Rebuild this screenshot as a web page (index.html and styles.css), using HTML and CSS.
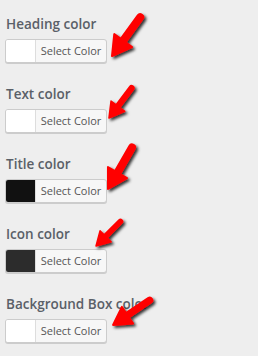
FILE: index.html
```html
<!DOCTYPE html>
<html>
<head>
    <meta charset="UTF-8">
    <title>Colors</title>
    <link rel="stylesheet" href="styles.css">
</head>
<body>
    <div class="panel">
        <div class="field">
            <div class="label">Heading color</div>
            <button class="picker"><span class="swatch white"></span><span class="text">Select Color</span></button>
        </div>
        <div class="field">
            <div class="label">Text color</div>
            <button class="picker"><span class="swatch white"></span><span class="text">Select Color</span></button>
        </div>
        <div class="field">
            <div class="label">Title color</div>
            <button class="picker"><span class="swatch black"></span><span class="text">Select Color</span></button>
        </div>
        <div class="field">
            <div class="label">Icon color</div>
            <button class="picker"><span class="swatch dark"></span><span class="text">Select Color</span></button>
        </div>
        <div class="field">
            <div class="label">Background Box color</div>
            <button class="picker"><span class="swatch white"></span><span class="text">Select Color</span></button>
        </div>
    </div>

    <svg class="arrows" width="258" height="356" viewBox="0 0 258 356">
        <defs>
            <filter id="shadow" x="-30%" y="-30%" width="160%" height="160%">
                <feDropShadow dx="2" dy="2" stdDeviation="1.5" flood-color="#000" flood-opacity="0.8"/>
            </filter>
            <g id="arrow">
                <line x1="-14" y1="0" x2="-48" y2="0" stroke="#ff0000" stroke-width="8" stroke-linecap="round"/>
                <polygon points="0,0 -19,-11 -19,11" fill="#ff0000" stroke="#ff0000" stroke-width="2" stroke-linejoin="round"/>
            </g>
        </defs>
        <g filter="url(#shadow)">
            <use href="#arrow" transform="translate(112 56) rotate(126)"/>
            <use href="#arrow" transform="translate(109 118) rotate(127) scale(0.78)"/>
            <use href="#arrow" transform="translate(108 189) rotate(120)"/>
            <use href="#arrow" transform="translate(96 246) rotate(135) scale(0.72)"/>
            <use href="#arrow" transform="translate(113 325) rotate(146) scale(0.92)"/>
        </g>
    </svg>
</body>
</html>
```
FILE: styles.css
```css
* {
    margin: 0;
    padding: 0;
    box-sizing: border-box;
}
body {
    background: #eeeeee;
    font-family: "Open Sans", "Noto Sans", sans-serif;
    width: 258px;
    height: 356px;
    overflow: hidden;
}
.panel {
    display: flex;
    flex-direction: column;
    gap: 21px;
    padding: 14px 0 0 5px;
}
.field .label {
    height: 20px;
    line-height: 20px;
    margin: 0 0 5px 1px;
    font-size: 13.5px;
    font-weight: 600;
    color: #5a6068;
}
.picker {
    display: flex;
    align-items: stretch;
    width: 102px;
    height: 24px;
    border: 1px solid #cccccc;
    border-radius: 3px;
    background: #f7f7f7;
    box-shadow: 0 1px 0 #cccccc;
    overflow: hidden;
    font-family: inherit;
    cursor: pointer;
}
.swatch {
    width: 30px;
    border-right: 1px solid #dddddd;
}
.swatch.white {
    background: #ffffff;
}
.swatch.black {
    background: #111111;
}
.swatch.dark {
    background: #2c2c2c;
}
.picker .text {
    flex: 1;
    line-height: 22px;
    font-size: 11px;
    color: #555555;
    text-align: center;
}
.arrows {
    position: absolute;
    left: 0;
    top: 0;
}
```
